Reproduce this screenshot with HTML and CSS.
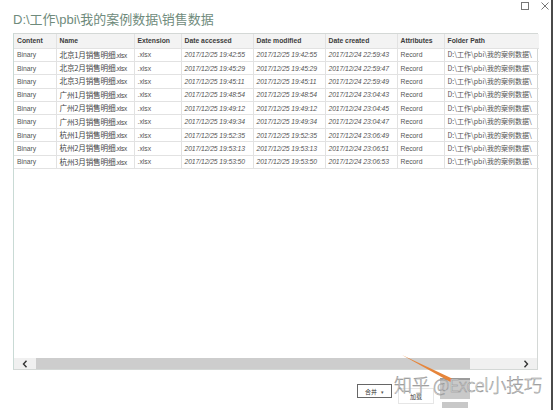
FILE: index.html
```html
<!DOCTYPE html>
<html>
<head>
<meta charset="utf-8">
<link rel="stylesheet" href="styles.css">
</head>
<body>
<div class="window">
  <div class="controls">
    <span class="max"></span>
    <svg class="close" width="8" height="8" viewBox="0 0 8 8"><path d="M0.5 0.5L7.5 7.5M7.5 0.5L0.5 7.5" stroke="#777" stroke-width="1" fill="none"/></svg>
  </div>
  <div class="title">D:\工作\pbi\我的案例数据\销售数据</div>
  <div class="grid">
    <table class="data">
      <colgroup>
        <col style="width:42px"><col style="width:78px"><col style="width:47px"><col style="width:72px"><col style="width:72px"><col style="width:72px"><col style="width:47px"><col style="width:95px">
      </colgroup>
      <thead>
        <tr><th>Content</th><th>Name</th><th>Extension</th><th>Date accessed</th><th>Date modified</th><th>Date created</th><th>Attributes</th><th>Folder Path</th></tr>
      </thead>
      <tbody>
        <tr><td>Binary</td><td class="nm">北京1月销售明细<small>.xlsx</small></td><td>.xlsx</td><td class="dt">2017/12/25 19:42:55</td><td class="dt">2017/12/25 19:42:55</td><td class="dt">2017/12/24 22:59:43</td><td>Record</td><td class="fp">D:\工作\pbi\我的案例数据\</td></tr>
        <tr><td>Binary</td><td class="nm">北京2月销售明细<small>.xlsx</small></td><td>.xlsx</td><td class="dt">2017/12/25 19:45:29</td><td class="dt">2017/12/25 19:45:29</td><td class="dt">2017/12/24 22:59:47</td><td>Record</td><td class="fp">D:\工作\pbi\我的案例数据\</td></tr>
        <tr><td>Binary</td><td class="nm">北京3月销售明细<small>.xlsx</small></td><td>.xlsx</td><td class="dt">2017/12/25 19:45:11</td><td class="dt">2017/12/25 19:45:11</td><td class="dt">2017/12/24 22:59:49</td><td>Record</td><td class="fp">D:\工作\pbi\我的案例数据\</td></tr>
        <tr><td>Binary</td><td class="nm">广州1月销售明细<small>.xlsx</small></td><td>.xlsx</td><td class="dt">2017/12/25 19:48:54</td><td class="dt">2017/12/25 19:48:54</td><td class="dt">2017/12/24 23:04:43</td><td>Record</td><td class="fp">D:\工作\pbi\我的案例数据\</td></tr>
        <tr><td>Binary</td><td class="nm">广州2月销售明细<small>.xlsx</small></td><td>.xlsx</td><td class="dt">2017/12/25 19:49:12</td><td class="dt">2017/12/25 19:49:12</td><td class="dt">2017/12/24 23:04:45</td><td>Record</td><td class="fp">D:\工作\pbi\我的案例数据\</td></tr>
        <tr><td>Binary</td><td class="nm">广州3月销售明细<small>.xlsx</small></td><td>.xlsx</td><td class="dt">2017/12/25 19:49:34</td><td class="dt">2017/12/25 19:49:34</td><td class="dt">2017/12/24 23:04:47</td><td>Record</td><td class="fp">D:\工作\pbi\我的案例数据\</td></tr>
        <tr><td>Binary</td><td class="nm">杭州1月销售明细<small>.xlsx</small></td><td>.xlsx</td><td class="dt">2017/12/25 19:52:35</td><td class="dt">2017/12/25 19:52:35</td><td class="dt">2017/12/24 23:06:49</td><td>Record</td><td class="fp">D:\工作\pbi\我的案例数据\</td></tr>
        <tr><td>Binary</td><td class="nm">杭州2月销售明细<small>.xlsx</small></td><td>.xlsx</td><td class="dt">2017/12/25 19:53:13</td><td class="dt">2017/12/25 19:53:13</td><td class="dt">2017/12/24 23:06:51</td><td>Record</td><td class="fp">D:\工作\pbi\我的案例数据\</td></tr>
        <tr><td>Binary</td><td class="nm">杭州3月销售明细<small>.xlsx</small></td><td>.xlsx</td><td class="dt">2017/12/25 19:53:50</td><td class="dt">2017/12/25 19:53:50</td><td class="dt">2017/12/24 23:06:53</td><td>Record</td><td class="fp">D:\工作\pbi\我的案例数据\</td></tr>
      </tbody>
    </table>
    <div class="blank"></div>
    <div class="hscroll">
      <div class="sbtn"><svg width="6" height="8" viewBox="0 0 6 8"><path d="M4.5 0.8L1.5 4L4.5 7.2" stroke="#333" stroke-width="1.4" fill="none"/></svg></div>
      <div class="thumb"></div>
      <div class="track"></div>
      <div class="sbtn"><svg width="6" height="8" viewBox="0 0 6 8"><path d="M1.5 0.8L4.5 4L1.5 7.2" stroke="#333" stroke-width="1.4" fill="none"/></svg></div>
    </div>
  </div>
  <div class="footer">
    <div class="btn combine">合并 <span class="caret">▾</span></div>
    <div class="btn load">加载</div>
    <div class="btn ghost">
      <div class="ghost-top"></div>
      <div class="ghost-bottom"></div>
    </div>
  </div>
  <svg class="arrow" width="60" height="32" viewBox="0 0 60 32"><polygon points="0,0 50,23.5 48.5,27" fill="#e6853a"/></svg>
  <div class="watermark">知乎 @Excel小技巧</div>
</div>
</body>
</html>
```

FILE: styles.css
```css
html, body {
  margin: 0;
  padding: 0;
  background: #fff;
}
.window {
  position: relative;
  width: 551px;
  height: 410px;
  border-right: 2px solid #4a4a4a;
  display: flex;
  flex-direction: column;
  font-family: "Liberation Sans", "Noto Sans CJK SC", sans-serif;
}
.controls {
  height: 10px;
  display: flex;
  justify-content: flex-end;
  align-items: flex-start;
  gap: 12px;
  padding: 2px 2px 0 0;
  box-sizing: border-box;
}
.max {
  width: 6px;
  height: 6px;
  border: 1px solid #777;
}
.close {
  display: block;
}
.title {
  margin-left: 13px;
  font-size: 13px;
  line-height: 20px;
  height: 20px;
  margin-bottom: 3px;
  color: #6f8b7c;
  font-family: "Liberation Sans", "Noto Sans CJK SC", sans-serif;
  white-space: nowrap;
}
.grid {
  margin-left: 13px;
  width: 525px;
  height: 337px;
  box-sizing: border-box;
  border: 1px solid #d4d8d6;
  border-left-color: #c9dad5;
  display: flex;
  flex-direction: column;
}
.data {
  table-layout: fixed;
  border-collapse: collapse;
  width: 523px;
  font-size: 6.8px;
  color: #555;
}
.data th, .data td {
  border-right: 1px solid #e2e2e2;
  border-bottom: 1px solid #e2e2e2;
  padding: 0 3px;
  text-align: left;
  white-space: nowrap;
  overflow: hidden;
  height: 13.4px;
  box-sizing: border-box;
  line-height: 9px;
  vertical-align: middle;
}
.data th:last-child, .data td:last-child {
  border-right: none;
}
.data th {
  height: 14px;
  background: #f3f3f3;
  color: #3c3c3c;
  font-weight: bold;
  font-size: 6.8px;
}
.data .nm {
  font-size: 7.6px;
  color: #444;
  font-family: "Noto Sans CJK SC", sans-serif;
  letter-spacing: -0.2px;
}
.data .nm small {
  font-size: 6.3px;
  font-family: "Liberation Sans", sans-serif;
}
.data .dt {
  font-style: italic;
  color: #555;
  letter-spacing: -0.1px;
}
.data .fp {
  font-size: 7px;
  font-family: "Noto Sans CJK SC", sans-serif;
  color: #555;
  text-overflow: clip;
}
.blank {
  flex: 1;
}
.hscroll {
  height: 11px;
  display: flex;
  background: #f0f0f0;
}
.sbtn {
  width: 22px;
  display: flex;
  align-items: center;
  justify-content: center;
  background: #f0f0f0;
}
.thumb {
  width: 434px;
  background: #cdcdcd;
}
.track {
  flex: 1;
}
.footer {
  flex: 1;
  display: flex;
  justify-content: flex-end;
  align-items: flex-start;
  padding-right: 81px;
  padding-top: 8px;
  gap: 6px;
}
.btn {
  box-sizing: border-box;
  font-family: "Noto Sans CJK SC", sans-serif;
  font-size: 6px;
  color: #333;
  display: flex;
  align-items: center;
  justify-content: center;
}
.combine {
  margin-top: 6px;
  width: 35px;
  height: 14px;
  border: 1px solid #666;
  gap: 4px;
}
.caret {
  font-size: 5px;
  color: #555;
}
.load {
  margin-top: 10px;
  width: 36px;
  height: 16px;
  border: 1px solid #e6e6e6;
  justify-content: flex-start;
  padding-left: 11px;
}
.ghost {
  width: 30px;
  flex-direction: column;
  align-items: stretch;
  gap: 3px;
}
.ghost-top {
  height: 19px;
  background: #c9c9c9;
  border-top: 2px solid #9c9c9c;
}
.ghost-bottom {
  height: 6px;
  background: #c8c8c8;
  margin: 0 2px;
}
.arrow {
  position: absolute;
  left: 402px;
  top: 355px;
}
.watermark {
  position: absolute;
  left: 394px;
  top: 372px;
  font-family: "Noto Sans CJK SC", sans-serif;
  font-weight: 300;
  font-size: 18px;
  line-height: 24px;
  color: rgba(255, 255, 255, 0.9);
  -webkit-text-stroke: 0.5px #8e8e8e;
  white-space: nowrap;
  letter-spacing: -0.3px;
}
```
